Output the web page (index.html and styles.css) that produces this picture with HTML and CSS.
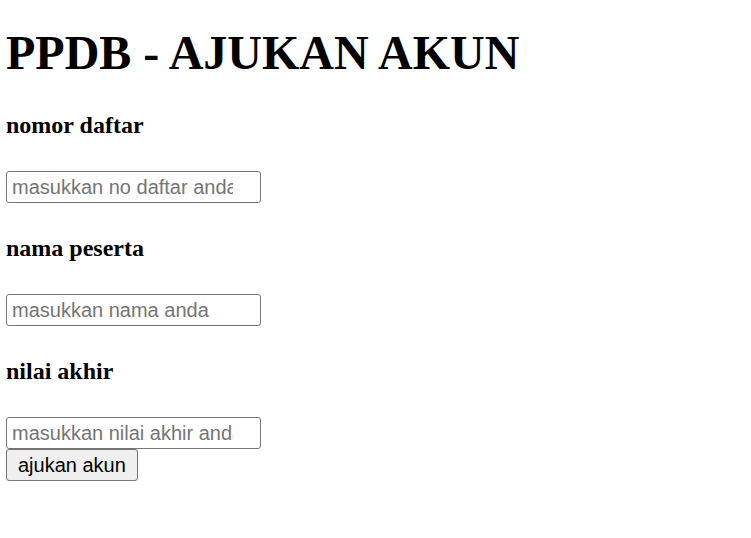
FILE: index.html
```html
<!DOCTYPE html>
<html>
<head>
<meta charset="utf-8">
<title>PPDB - AJUKAN AKUN</title>
<link rel="stylesheet" href="styles.css">
</head>
<body>
<h1 class="title">PPDB - AJUKAN AKUN</h1>
<form class="form">
  <h4 class="label">nomor daftar</h4>
  <input class="field" type="text" placeholder="masukkan no daftar anda">
  <h4 class="label">nama peserta</h4>
  <input class="field" type="text" placeholder="masukkan nama anda">
  <h4 class="label">nilai akhir</h4>
  <input class="field" type="text" placeholder="masukkan nilai akhir anda">
  <button class="submit" type="submit">ajukan akun</button>
</form>
</body>
</html>
```

FILE: styles.css
```css
body {
  margin: 0 6px;
  font-family: "Liberation Serif", "Times New Roman", serif;
  color: #000;
  background: #fff;
}
.title {
  font-size: 48px;
  font-weight: bold;
  margin: 25px 0 32px;
  line-height: normal;
}
.form {
  margin: 0;
}
.label {
  font-size: 24px;
  font-weight: bold;
  margin: 32px 0;
  line-height: normal;
}
.field {
  display: block;
  box-sizing: border-box;
  width: 255px;
  height: 32px;
  margin: 0;
  padding: 1px 27px 1px 5px;
  font-family: "Liberation Sans", Arial, sans-serif;
  font-size: 20px;
  color: #000;
  border: 1px solid #767676;
  border-radius: 3px;
  background: #fff;
}
.field::placeholder {
  color: #757575;
}
.submit {
  display: block;
  box-sizing: border-box;
  height: 32px;
  margin: 0;
  padding: 1px 11px;
  font-family: "Liberation Sans", Arial, sans-serif;
  font-size: 20px;
  color: #000;
  background: #efefef;
  border: 1px solid #767676;
  border-radius: 3px;
}
```
